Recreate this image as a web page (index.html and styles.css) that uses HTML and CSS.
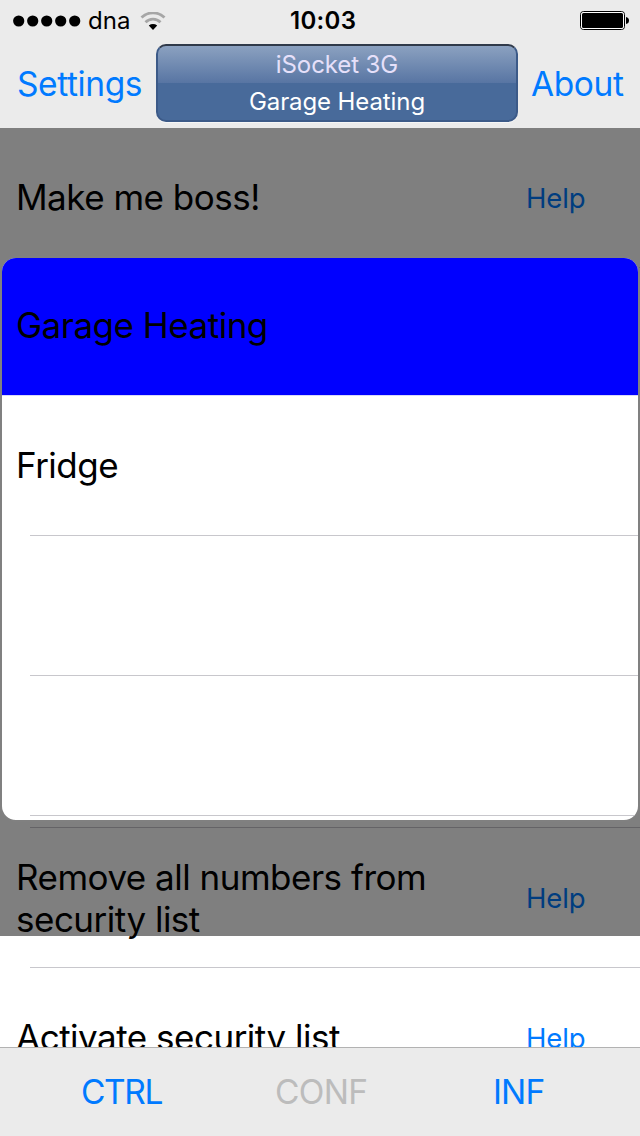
FILE: index.html
```html
<!DOCTYPE html>
<html lang="en">
<head>
    <meta charset="UTF-8">
    <meta name="viewport" content="width=device-width, initial-scale=1.0">
    <title>iSocket 3G</title>
    <link rel="stylesheet" href="styles.css">
</head>
<body>

<div class="screen">
    <header class="header">
        <div class="status-bar">
            <div class="carrier">
                <svg class="signal" width="68" height="12" viewBox="0 0 68 12">
                    <circle cx="5.7" cy="6" r="5.6"/>
                    <circle cx="19.7" cy="6" r="5.6"/>
                    <circle cx="33.7" cy="6" r="5.6"/>
                    <circle cx="47.7" cy="6" r="5.6"/>
                    <circle cx="61.7" cy="6" r="5.6"/>
                </svg>
                <span class="carrier-name">dna</span>
                <svg class="wifi" width="26" height="18" viewBox="0 0 26 18">
                    <path d="M1.5 5.6A16.3 16.3 0 0 1 24.5 5.6" fill="none" stroke="#a6a6a6" stroke-width="2.8"/>
                    <path d="M5.5 10.2A10.6 10.6 0 0 1 20.5 10.2" fill="none" stroke="#a6a6a6" stroke-width="2.8"/>
                    <path d="M8.8 13.4Q13 10.6 17.2 13.4L13 18Z"/>
                </svg>
            </div>
            <div class="clock">10:03</div>
            <svg class="battery" width="50" height="20" viewBox="0 0 50 20">
                <rect x="0.5" y="0.5" width="44" height="18" rx="3" fill="none" stroke="#000"/>
                <rect x="1.5" y="1.5" width="42" height="16" rx="2" fill="none" stroke="#fff"/>
                <rect x="2" y="2" width="41" height="15" rx="1.5"/>
                <path d="M46 6Q49 6.5 49 9.5T46 13Z"/>
            </svg>
        </div>
        <nav class="nav-bar">
            <a class="nav-link settings">Settings</a>
            <div class="device">
                <div class="device-model">iSocket 3G</div>
                <div class="device-name">Garage Heating</div>
            </div>
            <a class="nav-link about">About</a>
        </nav>
    </header>

    <main class="content">
        <ul class="list">
            <li class="row"><span class="label">Make me boss!</span><a class="help">Help</a></li>
            <li class="row"></li>
            <li class="row"></li>
            <li class="row"></li>
            <li class="row"></li>
            <li class="row"><span class="label two-line">Remove all numbers from security list</span><a class="help">Help</a></li>
            <li class="row"><span class="label">Activate security list</span><a class="help">Help</a></li>
        </ul>

        <!-- Device picker shown over the dimmed list -->
        <div class="overlay">
            <ul class="picker">
                <li class="row selected"><span class="label">Garage Heating</span></li>
                <li class="row"><span class="label">Fridge</span></li>
                <li class="row"></li>
                <li class="row"></li>
            </ul>
        </div>
    </main>

    <footer class="tab-bar">
        <a class="tab ctrl">CTRL</a>
        <a class="tab conf">CONF</a>
        <a class="tab inf">INF</a>
    </footer>
</div>

</body>
</html>
```
FILE: styles.css
```css
* {
    box-sizing: border-box;
}
body {
    margin: 0;
    font-family: Inter, "Liberation Sans", sans-serif;
    background-color: #ffffff;
    color: #000000;
}
ul {
    list-style: none;
    margin: 0;
    padding: 0;
}
.screen {
    display: flex;
    flex-direction: column;
    width: 640px;
    height: 1136px;
    overflow: hidden;
}
.header {
    height: 128px;
    flex: none;
    background-color: #ebebeb;
}
.status-bar {
    display: grid;
    grid-template-columns: 277px auto 1fr;
    align-items: center;
    height: 41px;
    padding: 0 10px 0 13px;
}
.carrier {
    display: flex;
    align-items: center;
}
.carrier-name {
    margin-left: 7px;
    width: 44px;
    font-size: 24px;
}
.wifi {
    margin-left: 8px;
}
.clock {
    font-size: 24px;
    font-weight: 600;
    letter-spacing: 0.3px;
}
.battery {
    justify-self: end;
}
.nav-bar {
    display: flex;
    height: 87px;
    padding: 3px 0 0 17px;
}
.nav-link {
    line-height: 80px;
    font-size: 33.5px;
    letter-spacing: -0.4px;
    color: #007aff;
    white-space: nowrap;
}
.settings {
    width: 139px;
}
.about {
    margin-left: 13px;
}
.device {
    width: 362px;
    height: 78px;
    border: 2px solid #3c5a88;
    border-top-color: #303a4a;
    border-radius: 10px;
    background: linear-gradient(#8ba1c0, #5875a3 50%, #486a9a 50%, #486a9a);
    box-shadow: 0 1px 0 #f6f6f6;
    text-align: center;
    font-size: 24px;
    line-height: 37px;
    letter-spacing: -0.1px;
    color: #ffffff;
}
.device-model {
    color: #e6e0fa;
}
.content {
    position: relative;
    height: 919px;
    overflow: hidden;
}
.row {
    position: relative;
    display: flex;
    align-items: center;
    height: 140px;
    padding-left: 16px;
}
.row::after {
    content: "";
    position: absolute;
    left: 30px;
    right: 0;
    bottom: 0;
    height: 1px;
    background-color: #c8c7cc;
}
.label {
    width: 440px;
    padding-bottom: 2px;
    font-size: 35px;
    line-height: 42px;
    letter-spacing: -0.5px;
}
.two-line {
    padding-bottom: 0;
}
.help {
    margin-left: 70px;
    font-size: 27.5px;
    letter-spacing: -0.1px;
    color: #007aff;
}
.overlay {
    position: absolute;
    top: 0;
    left: 0;
    width: 640px;
    height: 808px;
    padding-top: 128px;
    background-color: rgba(0, 0, 0, 0.5);
}
.picker {
    height: 566px;
    overflow: hidden;
    border: 2px solid #808080;
    border-radius: 16px;
    background-color: #ffffff;
}
.picker .row {
    padding-left: 14px;
}
.picker .row::after {
    left: 28px;
}
.picker .selected {
    height: 138px;
    padding-bottom: 2px;
    background-color: #0000ff;
}
.picker .selected::after {
    left: 0;
    background-color: #d8d8f8;
}
.tab-bar {
    display: flex;
    height: 89px;
    border-top: 1px solid #b2b2b2;
    background-color: #ebebeb;
    padding-left: 81px;
    line-height: 89px;
    font-size: 33.5px;
    color: #007aff;
}
.ctrl {
    width: 194px;
    letter-spacing: -1.4px;
}
.conf {
    width: 218px;
    letter-spacing: -0.7px;
    color: #bcbcbc;
}
.inf {
    letter-spacing: -0.9px;
}
```
